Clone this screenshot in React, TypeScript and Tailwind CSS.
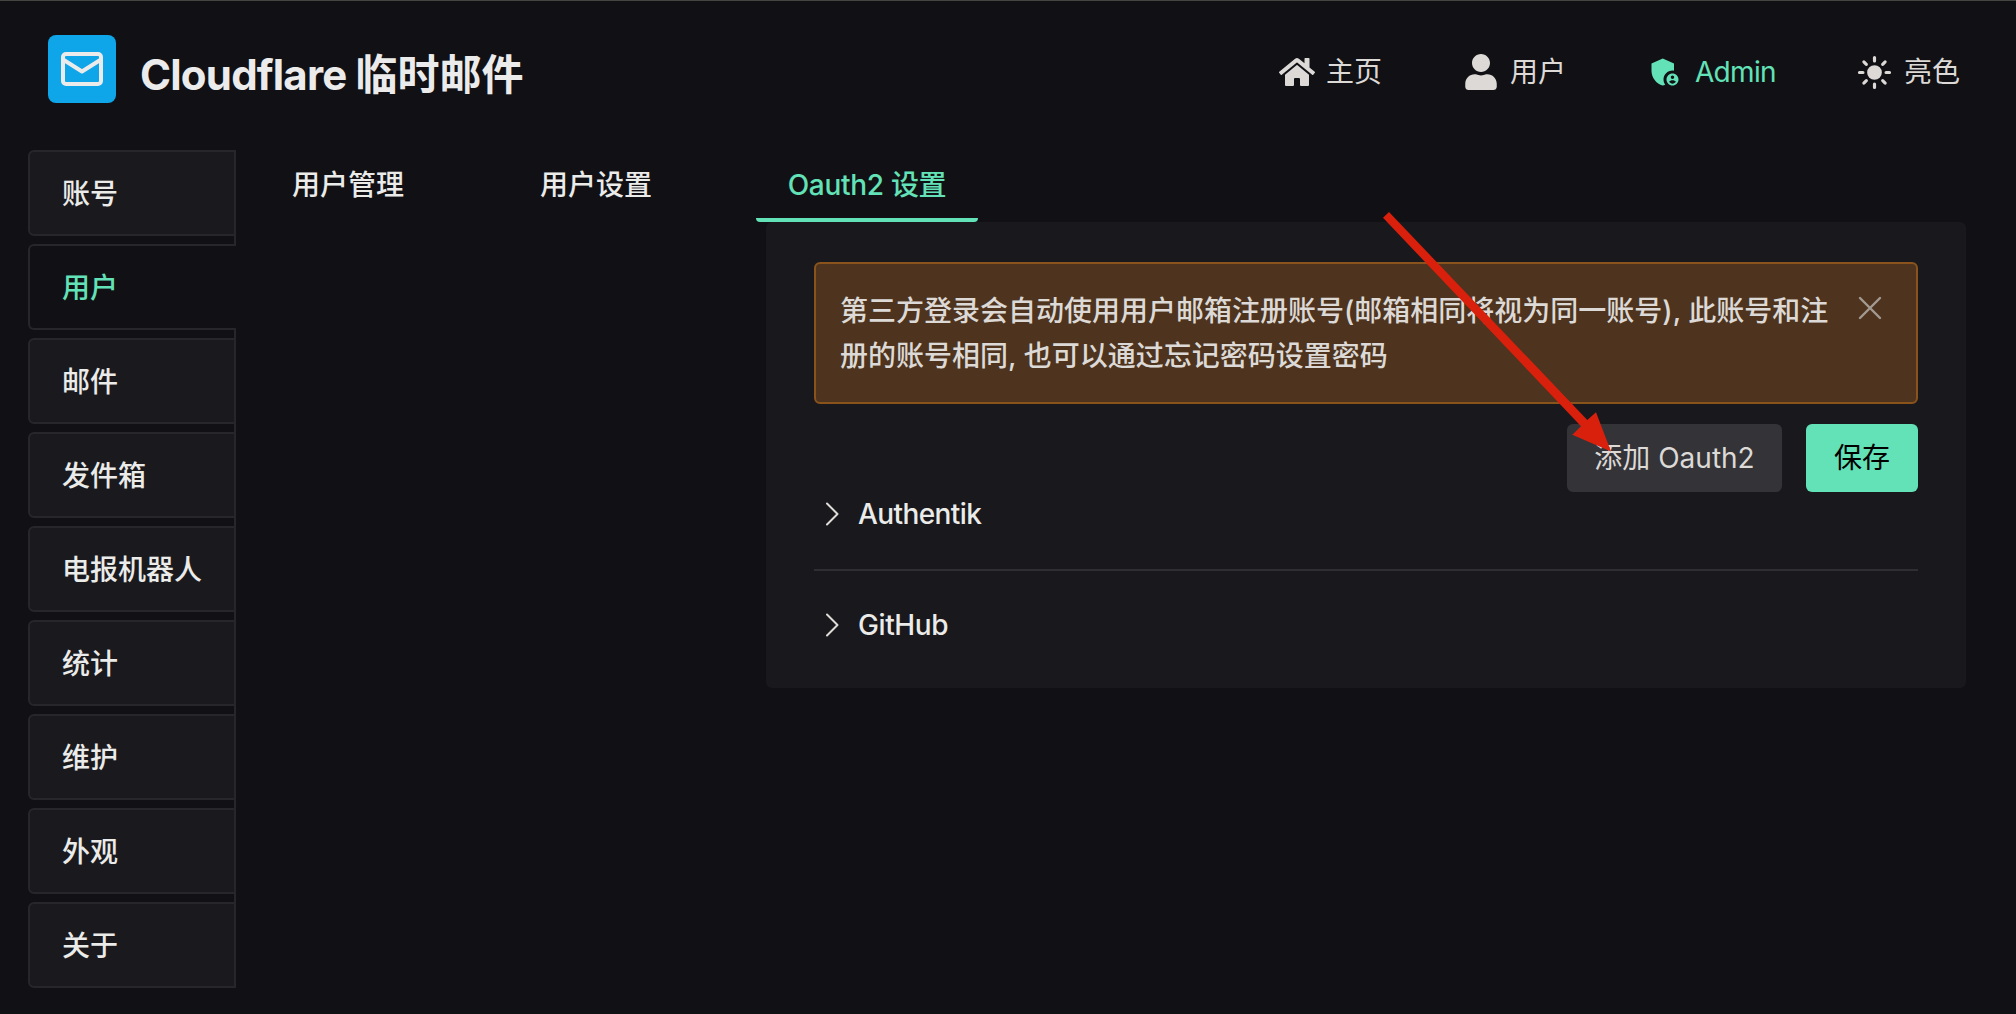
import { FaHome, FaUser } from "react-icons/fa";
import { IoSunny } from "react-icons/io5";
import { MdAdminPanelSettings } from "react-icons/md";

const sideTabs = ["账号", "用户", "邮件", "发件箱", "电报机器人", "统计", "维护", "外观", "关于"];

function Logo() {
  return (
    <svg className="block h-[68px] w-[68px] rounded-lg bg-[#0fa5e9]" viewBox="0 0 68 68" fill="none" stroke="#ebebeb" strokeWidth="4" strokeLinejoin="round">
      <rect x="15" y="19" width="38" height="30" rx="3" />
      <path d="M15 24.5 34 36.5 53 24.5" />
    </svg>
  );
}

function Header() {
  return (
    <header className="flex h-[149px] pl-12 pt-[34px]">
      <Logo />
      <h1 className="ml-6 mt-2.5 h-[60px] whitespace-nowrap text-[42px] font-bold leading-[60px] tracking-[-0.8px] text-[#ebebeb]">
        Cloudflare <span className="tracking-normal">临时邮件</span>
      </h1>
      <nav className="ml-auto flex h-[74px] items-center font-normal text-[#dcd9d6]">
        <a className="flex w-[186px] items-center">
          <FaHome className="w-9" size={32} />
          <span className="ml-[11px] pt-px">主页</span>
        </a>
        <a className="flex w-[182px] items-center">
          <FaUser className="w-8" size={36} />
          <span className="ml-[13px] pt-px">用户</span>
        </a>
        <a className="flex w-[209px] items-center text-[#63e2b7]">
          <MdAdminPanelSettings size={36} />
          <span className="ml-3 tracking-[-0.7px]">Admin</span>
        </a>
        <a className="flex w-40 items-center">
          <IoSunny size={37} />
          <span className="ml-[11px] pt-px">亮色</span>
        </a>
      </nav>
    </header>
  );
}

function Sidebar() {
  return (
    <aside className="flex w-[208px] shrink-0 flex-col">
      {sideTabs.map((name, i) => (
        <div key={name}>
          {i > 0 && <div className="h-2 border-r-2 border-[#27272b]" />}
          <div
            className={
              i === 1
                ? "flex h-[86px] items-center rounded-l-md border-2 border-r-0 border-[#27272b] pl-8 pt-0.5 text-[#63e2b7]"
                : "flex h-[86px] items-center rounded-l-md border-2 border-[#27272b] bg-[#1a1a1e] pl-8 pt-0.5"
            }
          >
            {name}
          </div>
        </div>
      ))}
    </aside>
  );
}

function Chevron() {
  return (
    <svg className="h-6 w-4" viewBox="0 0 16 24" fill="none" stroke="#e0ddd8" strokeWidth="2" strokeLinecap="round" strokeLinejoin="round">
      <path d="M3 1.5 13.5 12 3 22.5" />
    </svg>
  );
}

function Arrow() {
  return (
    <svg className="pointer-events-none absolute left-[614px] top-[-12px] h-[244px] w-[234px]" viewBox="1380 210 234 244">
      <path fill="#d8200d" d="M1389 212 1587.3 420 1596 412.3 1611 451.5 1572.3 434.7 1581 426.3 1383 217.7Z" />
    </svg>
  );
}

function OauthCard() {
  return (
    <section className="relative ml-[474px] h-[466px] w-[1200px] rounded-md bg-[#19191d] px-12 pt-10">
      <div className="flex h-[142px] rounded-md border-2 border-[#8a531c] bg-[#4e341e] pl-6 pt-[25px] text-[#dcd9d6]">
        <p className="w-[992px] leading-[45px]">
          第三方登录会自动使用用户邮箱注册账号(邮箱相同将视为同一账号), 此账号和注
          <br />
          册的账号相同, 也可以通过忘记密码设置密码
        </p>
        <svg className="ml-[26px] mt-[7px] h-6 w-6" viewBox="0 0 24 24" fill="none" stroke="#a39a92" strokeWidth="2.4" strokeLinecap="round">
          <path d="M2 2 22 22M22 2 2 22" />
        </svg>
      </div>
      <div className="mt-5 flex justify-end gap-6">
        <button className="h-[68px] w-[215px] rounded-md bg-[#343438] pt-px font-normal text-[#dcd9d6]">添加 Oauth2</button>
        <button className="h-[68px] w-28 rounded-md bg-[#63e2b7] pt-px font-normal text-black">保存</button>
      </div>
      <div className="flex h-[79px] border-b-2 border-[#2f2f33] pl-2.5 tracking-[-0.6px]">
        <div className="flex h-11 items-center gap-[18px]">
          <Chevron />
          <span>Authentik</span>
        </div>
      </div>
      <div className="mt-8 flex h-11 items-center gap-[18px] pl-2.5 tracking-[-0.4px]">
        <Chevron />
        <span>GitHub</span>
      </div>
      <Arrow />
    </section>
  );
}

export default function App() {
  return (
    <div className="h-[1014px] w-[2016px] overflow-hidden border-t border-[#45463f] bg-[#111115] font-['Inter','Noto_Sans_CJK_SC',sans-serif] text-[28px] font-[450] leading-[45px] text-[#ebebe9]">
      <Header />
      <main className="flex pl-7">
        <Sidebar />
        <div className="ml-14">
          <div className="flex h-[72px]">
            <span className="mt-[13px] w-[248px]">用户管理</span>
            <span className="mt-[13px] w-[216px]">用户设置</span>
            <span className="flex w-[222px] justify-center rounded-sm border-b-4 border-[#63e2b7] pt-[13px] tracking-[-0.3px] text-[#63e2b7]">
              Oauth2 设置
            </span>
          </div>
          <OauthCard />
        </div>
      </main>
    </div>
  );
}
